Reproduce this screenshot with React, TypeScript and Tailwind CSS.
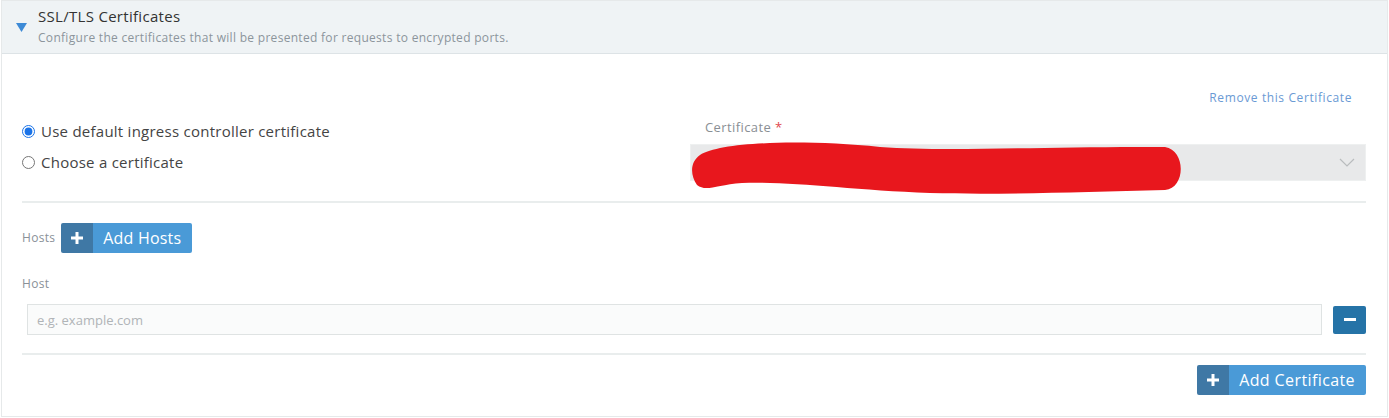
import React, { useState } from "react";

const PlusIcon = () => (
    <svg width="12" height="12" viewBox="0 0 12 12">
        <path d="M4.5 0h3v4.5H12v3H7.5V12h-3V7.5H0v-3h4.5z" fill="#ffffff" />
    </svg>
);

const App = () => {
    const [ useDefault, setUseDefault ] = useState<boolean>(true)
    const [ host, setHost ] = useState<string>('')

    return (
        <div className="relative w-[1389px] h-[418px] bg-white font-['Open_Sans',sans-serif]">
            <div className="ml-px w-[1387px] h-[417px] border border-[#e6e9ea] flex flex-col">
                {/* header */}
                <div className="h-[53px] bg-[#eff3f5] border-b border-[#dde3e6] flex items-start">
                    <div className="w-[36px] pl-[14px] pt-[22px]">
                        <svg width="11" height="9" viewBox="0 0 11 9">
                            <path d="M0 0h11L5.5 9z" fill="#3d8ad6" />
                        </svg>
                    </div>
                    <div className="flex flex-col pt-[5px]">
                        <div className="text-[15px] tracking-[0.3px] leading-[20px] text-[#333]">SSL/TLS Certificates</div>
                        <div className="text-[12px] tracking-[0.3px] leading-[16px] text-[#8c959c] mt-[4px]">
                            Configure the certificates that will be presented for requests to encrypted ports.
                        </div>
                    </div>
                </div>

                {/* body */}
                <div className="pl-[20px] pr-[21px]">
                    <div className="flex justify-end pt-[36px] pr-[14px]">
                        <a className="text-[12px] tracking-[0.6px] leading-[16px] text-[#6a9ad4] cursor-pointer">Remove this Certificate</a>
                    </div>

                    <div className="grid grid-cols-[1fr_676px] mt-[6px]">
                        <div className="flex flex-col pt-[4px]">
                            <label className="flex items-center gap-[6px] h-[31px] text-[15px] tracking-[0.25px] text-[#444]">
                                <input type="radio" checked={useDefault} onChange={() => setUseDefault(true)} className="w-[13px] h-[13px] m-0 accent-[#1a73e8]" />
                                Use default ingress controller certificate
                            </label>
                            <label className="flex items-center gap-[6px] h-[31px] text-[15px] tracking-[0.25px] text-[#444]">
                                <input type="radio" checked={!useDefault} onChange={() => setUseDefault(false)} className="w-[13px] h-[13px] m-0 accent-[#1a73e8]" />
                                Choose a certificate
                            </label>
                        </div>
                        <div className="flex flex-col pt-[7px]">
                            <div className="pl-[15px] text-[13px] tracking-[0.4px] leading-[16px] text-[#8a8f94]">
                                Certificate <span className="text-[#e0474c]">*</span>
                            </div>
                            <div className="mt-[9px] h-[37px] bg-[#e8e9ea] border border-[#eef0f0] flex items-center justify-end pr-[10px]">
                                <svg width="16" height="9" viewBox="0 0 16 9">
                                    <path d="M1 1l7 7 7-7" fill="none" stroke="#b9bcbe" strokeWidth="1.2" />
                                </svg>
                            </div>
                        </div>
                    </div>

                    <div className="mt-[20px] h-[2px] bg-[#e9eded]" />

                    <div className="flex items-center gap-[6px] mt-[20px]">
                        <span className="text-[12px] tracking-[0.3px] text-[#8a9198]">Hosts</span>
                        <button className="flex h-[30px] rounded-[2px] overflow-hidden text-white text-[16px] tracking-[0.2px]">
                            <span className="w-[32px] bg-[#3f78a5] flex items-center justify-center"><PlusIcon /></span>
                            <span className="bg-[#4a9ad7] flex items-center pl-[10px] pr-[11px]">Add Hosts</span>
                        </button>
                    </div>

                    <div className="mt-[23px] text-[12px] tracking-[0.3px] leading-[16px] text-[#8a9198]">Host</div>

                    <div className="flex items-center mt-[12px]">
                        <input
                            value={host}
                            onChange={(e) => setHost(e.target.value)}
                            placeholder="e.g. example.com"
                            className="ml-[5px] w-[1295px] h-[31px] bg-[#fafbfb] border border-[#dfe3e3] px-[9px] text-[13px] text-[#444] placeholder:text-[#b0b4b7] outline-none"
                        />
                        <button className="ml-[11px] w-[33px] h-[28px] bg-[#2573a7] rounded-[2px] flex items-center justify-center">
                            <span className="w-[12px] h-[3px] bg-white" />
                        </button>
                    </div>

                    <div className="mt-[18px] h-[2px] bg-[#e9eded]" />

                    <div className="flex justify-end mt-[10px]">
                        <button className="flex h-[30px] rounded-[2px] overflow-hidden text-white text-[16px] tracking-[0.4px]">
                            <span className="w-[32px] bg-[#3f78a5] flex items-center justify-center"><PlusIcon /></span>
                            <span className="bg-[#4a9ad7] flex items-center pl-[10px] pr-[11px]">Add Certificate</span>
                        </button>
                    </div>
                </div>
            </div>

            {/* redaction scribble over the certificate select */}
            <svg className="absolute left-0 top-0 pointer-events-none" width="1389" height="418" viewBox="0 0 1389 418">
                <path
                    d="M700 155 C720 142, 800 139, 880 147 C950 152, 1050 146, 1165 147 C1186 150, 1186 188, 1165 190 C1080 192, 1000 195, 930 193 C850 190, 790 181, 742 183 C716 185, 706 192, 697 185 C690 175, 690 162, 700 155 Z"
                    fill="#e8171d"
                />
            </svg>
        </div>
    )
}

export default App
